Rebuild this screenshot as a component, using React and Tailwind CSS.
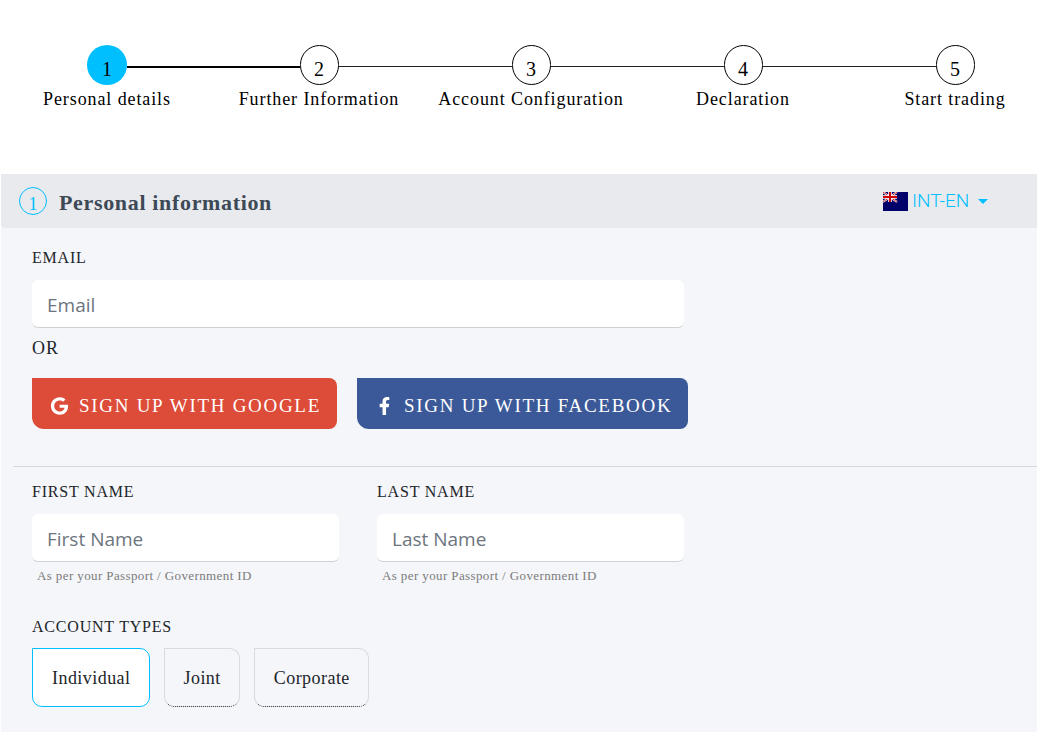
import { useState } from 'react';
import clsx from 'clsx';
import { FaFacebookF, FaGoogle } from 'react-icons/fa';

const STEPS = [
  'Personal details',
  'Further Information',
  'Account Configuration',
  'Declaration',
  'Start trading',
];

const ACCOUNT_TYPES = ['Individual', 'Joint', 'Corporate'];

const Stepper = ({ current }) => (
  <nav aria-label="Registration steps" className="overflow-hidden bg-white pt-[45px] pb-[65px]">
    <ol className="-mr-6 grid grid-cols-5">
      {STEPS.map((label, i) => (
        <li key={label} className="flex flex-col items-center">
          <div className="flex w-full items-start">
            <span
              className={clsx(
                'mt-[21px] flex-1',
                i === 0 && 'invisible',
                i === current + 1 ? 'h-[2px] bg-black' : 'h-px bg-[#222]'
              )}
            />
            <span
              className={clsx(
                'flex h-10 items-center justify-center rounded-full pt-2 text-[20px] leading-6 text-black',
                i === current ? 'w-10 bg-[#00bfff]' : 'w-[39px] border border-black'
              )}
            >
              {i + 1}
            </span>
            <span
              className={clsx(
                'mt-[21px] flex-1',
                i === STEPS.length - 1 && 'invisible',
                i === current ? 'h-[2px] bg-black' : 'h-px bg-[#222]'
              )}
            />
          </div>
          <span className="mt-1 text-[18px] leading-5 tracking-wider whitespace-nowrap text-black">
            {label}
          </span>
        </li>
      ))}
    </ol>
  </nav>
);

const Flag = () => (
  <svg viewBox="0 0 25 19" className="h-[19px] w-[25px]" aria-hidden="true">
    <rect width="25" height="19" fill="#00006b" />
    <path d="M0 0L14 10M14 0L0 10" stroke="#fff" strokeWidth="2" />
    <path d="M0 0L14 10M14 0L0 10" stroke="#c00" strokeWidth="0.8" />
    <path d="M7 0V10M0 5H14" stroke="#fff" strokeWidth="3.6" />
    <path d="M7 0V10M0 5H14" stroke="#d00000" strokeWidth="2" />
  </svg>
);

const LanguageSelect = () => (
  <div className="flex items-center gap-1">
    <Flag />
    <select
      aria-label="Language"
      className="w-[62px] cursor-pointer appearance-none bg-transparent font-['Roboto',sans-serif] text-[19px] leading-6 font-light text-[#00bfff] outline-none"
    >
      <option>INT-EN</option>
    </select>
    <svg viewBox="0 0 10 5" className="h-[5px] w-[10px]" aria-hidden="true">
      <path d="M0 0H10L5 5Z" fill="#00bfff" />
    </svg>
  </div>
);

const Field = ({ id, label, hint, type = 'text', placeholder }) => (
  <div>
    <label htmlFor={id} className="block text-[16px] leading-6 tracking-wider uppercase">
      {label}
    </label>
    <input
      id={id}
      type={type}
      placeholder={placeholder}
      className="mt-[10px] block h-12 w-full rounded-md border-b border-[#cfd1d5] bg-white px-[15px] pt-[2px] font-['Open_Sans',sans-serif] text-[19px] text-[#212529] outline-none placeholder:text-[#6c757d]"
    />
    {hint && (
      <small className="mt-1 block pl-[5px] text-[13px] leading-5 tracking-[0.03em] text-[#7b7b7b]">
        {hint}
      </small>
    )}
  </div>
);

const SocialButton = ({ icon: Icon, className, children }) => (
  <button
    type="button"
    className={clsx(
      'flex h-[51px] cursor-pointer items-center rounded-lg rounded-tl-none rounded-bl-xl pr-4 pl-[18px] pt-1 text-[19px] leading-6 tracking-[0.09em] text-white uppercase',
      className
    )}
  >
    <Icon className="mr-[10px] h-[18px] w-[19px]" />
    {children}
  </button>
);

const App = () => {
  const [accountType, setAccountType] = useState('Individual');

  return (
    <div className="flex min-h-screen flex-col bg-white pl-px font-['Liberation_Serif',serif] text-[#212529]">
      <Stepper current={0} />

      <main className="flex-1 bg-[#f5f6fa]">
        <header className="flex h-[54px] items-center justify-between rounded-bl bg-[#e9eaed] pr-[49px] pl-[18px]">
          <div className="flex items-center gap-3">
            <span className="flex h-7 w-7 items-center justify-center rounded-full border border-[#00bfff] pt-[6px] text-[18px] leading-5 text-[#00bfff]">
              1
            </span>
            <h1 className="pt-1 text-[22px] leading-7 font-bold tracking-[0.03em] text-[#3d4957]">
              Personal information
            </h1>
          </div>
          <LanguageSelect />
        </header>

        <form onSubmit={(e) => e.preventDefault()} className="pt-[18px] pb-6">
          <div className="px-[31px]">
            <div className="max-w-[652px]">
              <Field id="email" type="email" label="Email" placeholder="Email" />
            </div>
            <p className="mt-2 text-[18px] leading-6 tracking-wider">OR</p>
            <div className="mt-[18px] flex flex-wrap gap-5">
              <SocialButton icon={FaGoogle} className="bg-[#dd4b39]">
                Sign up with Google
              </SocialButton>
              <SocialButton icon={FaFacebookF} className="bg-[#3b5998]">
                Sign up with Facebook
              </SocialButton>
            </div>
          </div>

          <hr className="mt-[37px] ml-3 border-[#d6d8dc]" />

          <div className="px-[31px] pt-[13px]">
            <div className="grid max-w-[652px] grid-cols-2 gap-[38px]">
              <Field
                id="firstName"
                label="First Name"
                placeholder="First Name"
                hint="As per your Passport / Government ID"
              />
              <Field
                id="lastName"
                label="Last Name"
                placeholder="Last Name"
                hint="As per your Passport / Government ID"
              />
            </div>

            <fieldset className="mt-[29px]">
              <legend className="text-[16px] leading-6 tracking-wider uppercase">
                Account types
              </legend>
              <div className="mt-[9px] flex flex-wrap gap-[14px]">
                {ACCOUNT_TYPES.map((type) => (
                  <button
                    key={type}
                    type="button"
                    aria-pressed={accountType === type}
                    onClick={() => setAccountType(type)}
                    className={clsx(
                      'h-[59px] cursor-pointer rounded-[10px] rounded-tl-none border pr-[18px] pl-[19px] text-[18px] leading-6 tracking-wide',
                      accountType === type
                        ? 'border-[#00bfff] bg-white'
                        : 'border-[#d9dadd] [border-bottom:1px_dotted_#222]'
                    )}
                  >
                    {type}
                  </button>
                ))}
              </div>
            </fieldset>
          </div>
        </form>
      </main>
    </div>
  );
};

export default App;
